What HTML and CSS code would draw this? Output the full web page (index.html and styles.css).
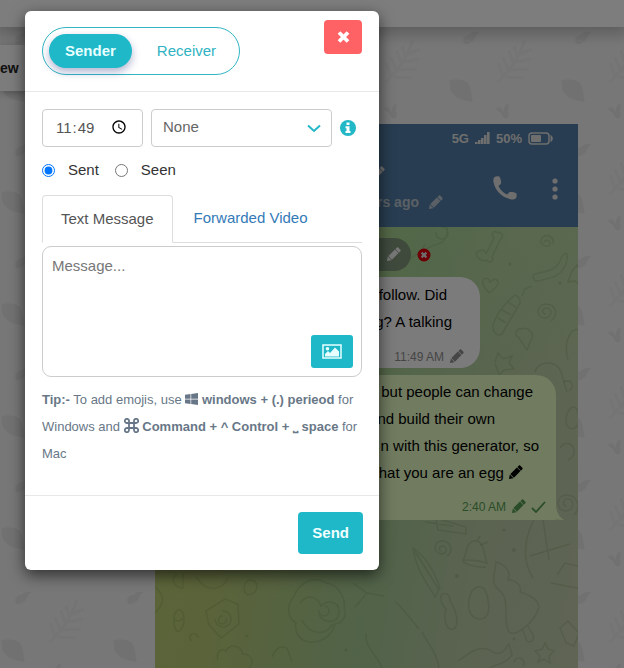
FILE: index.html
```html
<!DOCTYPE html>
<html lang="en">
<head>
<meta charset="utf-8">
<meta name="viewport" content="width=device-width, initial-scale=1">
<title>Chat generator</title>
<link rel="stylesheet" href="styles.css">
</head>
<body>
<svg class="defs" aria-hidden="true">
  <symbol id="pencil" viewBox="0 0 16 16"><path d="M1 15l1-4.800L5.800 14zM2.500 9.700l7-7 3.800 3.800-7 7zM10 2.200l1.500-1.500c.5-.5 1.200-.5 1.700 0l2.100 2.100c.5.5.5 1.200 0 1.700L13.800 6z"/></symbol>
</svg>

<div class="page">
  <svg class="leaves" aria-hidden="true">
    <defs>
      <pattern id="leaf" width="112" height="112" patternUnits="userSpaceOnUse">
        <path d="M1 81c5-3 14-2 19 2 3 4 3 10 5 19-8-1-16-3-20-8-4-4-2-8-4-13z"/>
        <path d="M16 44c-2-5 0-9 5-9 2-3 7-4 11-3-4 2-4 5-6 8-3 3-6 5-10 4z"/>
        <path d="M48 108c4-2 6 0 8 5-1-5 1-9 5-10 0 5-2 8-1 12h-8c-1-4-3-4-4-7zM52 0h9l-1 6h-4z"/>
        <g class="fern"><path d="M50 82c12-12 20-22 27-42M56 78l-6-15M61 72l-6-15M66 65l-5-14M70 58l-4-12M58 77l18 1M63 70l18-1M68 62l15-3M72 54l12-5"/></g>
      </pattern>
    </defs>
    <rect width="100%" height="100%" fill="url(#leaf)"/>
  </svg>
  <header class="topbar"></header>
  <main class="workspace">
    <aside class="side"><div class="side-tab">ew</div></aside>
    <section class="phone">
      <div class="phone-head">
        <div class="status">
          <span>5G</span>
          <svg width="15" height="13" viewBox="0 0 15 13"><path d="M0 12v-2h2.600v2zM3 12V8h2.600v4zM6 12V6h2.600v6zM9 12V3h2.600v9zM12 12V0h2.600v12z"/></svg>
          <span>50%</span>
          <svg width="25" height="13" viewBox="0 0 25 13"><rect x="1" y="1" width="20" height="11" rx="3" fill="none" stroke="currentColor" stroke-width="1.500"/><rect x="3" y="3" width="10" height="7" rx="1"/><path d="M22.500 3c3 1 3 6 0 7z"/></svg>
        </div>
        <div class="contact">
          <div class="who">
            <svg class="ico" width="15" height="15"><use href="#pencil"/></svg>
            <div class="seen">hours ago <svg class="ico" width="15" height="15"><use href="#pencil"/></svg></div>
          </div>
          <svg class="call" width="24" height="24" viewBox="0 0 24 24"><path d="M1 1.500C2.500.3 5 0 6.500.8 8 3.500 8.300 6 8 7.500c-.3 1-2 1.800-2.500 2.500 1.800 3.800 4.500 6.700 8.500 8.500 1-.5 1.600-2.200 3-2.500 2-.2 4.500.3 6.300 1.300.7 1.700.3 4-.8 5.500-1.300.8-3.500.8-5 .4C8.500 21 2.500 15 .6 6.500.2 4.800.3 2.500 1 1.500z"/></svg>
          <svg class="dots" width="6" height="22" viewBox="0 0 6 22"><circle cx="3" cy="3" r="2.600"/><circle cx="3" cy="11" r="2.600"/><circle cx="3" cy="19" r="2.600"/></svg>
        </div>
      </div>
      <div class="chat">
        <svg class="doodles" aria-hidden="true"><g transform="translate(-155 -227)">
          <path d="M380 262c15 4 38-2 45-18M425 250c8-8 24-2 22-23M436 232a6 6 0 1 0 5-5M476 254c3-6 10-4 10 0l8-16c-4-4 0-9 4-5 5-2 6 4 2 7l-8 17c3 4-3 7-5 3-5 2-9-1-11-6zM535 274c10-3 20-2 25-13 2-7 9-12 7-2-2 16-14 19-30 22-4 1-5-6-2-7zM544 243a3 3 0 1 1 4 3c-6 1-9-4-6-8 5-6 13 0 11 6"/>
          <path d="M489 293c-6-7-8-11-5-14 3-2 5 0 6 3 2-3 7-4 8 0 1 3-2 6-9 11zM493 325c4-12 12-22 22-30 5 2 6 6 4 10l-17 29c-5 3-10-2-9-9zM498 318l8 5M502 310l9 5M508 302l9 6M522 296l3-7 7-3M546 314c-5 0-4-7 1-6 6 1 5 9-2 10-9 0-9-13 0-14 11 0 14 10 6 17M520 338c-7-2-4-10 2-9 7-3 13 6 9 11l-4 10-8-12M568 360c-5-20 3-33 12-30M495 362l3-9 5 6 9-3-3 7 5 6-10 1-5 5-4-12M535 372c2-11 22-13 26 0l6 20M572 271l5-6 4 7 7 2-6 5-1 7-6-5-7 1z"/>
          <path d="M563 382c10-4 12 5 6 9M566 419c2-16 13-16 13 0 0 12-14 14-13 0M560 448c9-14 22 6 8 12M566 506c-5-1-2-8 3-7 7 2 4 12-4 12-9-1-9-14 0-16 12-1 17 12 9 20M425 522l28 4M438 530l28 4v-7l-30-9zM441 551c-3-1-2-5 2-5 5 1 4 8-2 8-8-1-8-13 1-13 9 0 12 10 5 15M463 560c4-4 2-19 12-19 9 0 8 10 12 22-9-3-16-3-24-3zM463 560c-2 4 16 8 23 7M477 541l3-5"/>
          <path d="M413 548c12 8 21 22 27 40l-5 9c-8-14-19-27-22-49zM413 548l26 42M441 595c6-4 9 1 9 6 8 12 9 26 3 28-7 2-10-12-7-20-3-3-6-8-5-14M395 601c8 8 16 18 24 28M469 600c2-15 15-18 18-5 4 16 1 24-7 24-8 0-13-8-11-19zM496 562c8 2 16 9 12 18 8 0 14 6 12 12 10 3 18 8 19 15-3 13-20 28-28 26-8-2-3-31-7-37-4-6-6-7-8-9-5-5-1-14 0-25zM522 628l5 13c4 3 8-2 6-6l-5-9M480 545l8-3M534 519c-10 21-12 42-1 59M557 575l8-12 16 4M551 583l31 6M530 556l40-12M540 500l9 60"/>
          <path d="M294 596c6-14 20-21 32-13 12 1 20 15 18 26 4 7-3 15-9 15-4 15-17 19-26 18-13-2-14-14-13-19-10-6-9-18-2-27zM300 603c9-11 18-5 21 3 8-8 19-3 18 7-2 13-17 9-20 2M319 610a5 5 0 1 0 6-4M302 620c6 13 22 18 31 4M353 583l14 10 17 3M367 593l-12 14M366 633c-2 14 12 23 16 35M422 632c5 11 14 18 17 36M458 661c12-8 22-18 35-9 7 5 13-3 16-8l3 11c-8 11-18 9-22 13M535 651l7-2 3-6 3 6 6 2-5 5 1 7-6-4-6 3 2-6zM514 663a5 5 0 1 1 9 3M560 628l8-7 11 12-5 13-8-3z"/>
          <path d="M174 621c0-14 9-15 10-3 1 10-9 23-10 3zM175 620c5 3 9-2 9-5M206 611l19-12 13 5 1 20-18 14-12-13zM215 619a8 8 0 1 0 7-8M223 616a4 4 0 1 0 3 2M192 641a4 4 0 1 1 6-3M218 660c-3-10 6-12 8-9 5-9 17-4 16 3 9-1 13 8 7 14M177 575c-7 2-4 12 6 13v-15M196 577c10 15 25 15 32 1M244 588c1-11 13-10 13-1 0 8-13 12-13 1M155 587c12 10 8 18 0 26M272 657c4-9 8-12 15-9l5 14"/>
          <g class="specks"><circle cx="457" cy="576" r="2"/><circle cx="514" cy="550" r="2"/><circle cx="504" cy="530" r="1.500"/><circle cx="514" cy="639" r="1.500"/><circle cx="346" cy="650" r="1.500"/><circle cx="510" cy="264" r="1.500"/><circle cx="560" cy="283" r="1.500"/><circle cx="247" cy="636" r="1.500"/></g>
        </g></svg>
        <div class="reaction">
          <span class="chip"><svg class="ico" width="15" height="15"><use href="#pencil"/></svg></span>
          <svg width="14" height="14" viewBox="0 0 14 14"><circle cx="7" cy="7" r="6.500" fill="#d9000c"/><path d="M4.600 4.600l4.800 4.800M9.400 4.600L4.600 9.400" stroke="#ddd" stroke-width="2.200"/></svg>
        </div>
        <div class="bubble incoming">
          <span class="line l-33">to follow. Did</span>
          <span class="line l-28">thing? A talking</span>
          <div class="meta">11:49 AM <svg class="ico" width="15" height="15"><use href="#pencil"/></svg></div>
        </div>
        <div class="bubble outgoing">
          <span class="line l-23">but people can change</span>
          <span class="line l-61">and build their own</span>
          <span class="line l-17">n with this generator, so</span>
          <span class="line l-33">that you are an egg <svg class="ico" width="15" height="15"><use href="#pencil"/></svg></span>
          <div class="meta">2:40 AM <svg class="ico" width="15" height="15"><use href="#pencil"/></svg> <svg width="15" height="12" viewBox="0 0 15 12"><path d="M1 7l4 4L14 1" fill="none" stroke="currentColor" stroke-width="1.800"/></svg></div>
          <svg class="tail" width="20" height="20" viewBox="0 0 20 20"><path d="M0 0h10c0 8 2 13 8 17-7 0-12-1-18-3z"/></svg>
        </div>
      </div>
    </section>
  </main>
</div>

<div class="backdrop">
  <form class="modal" role="dialog" aria-label="Add message">
    <div class="modal-head">
      <div class="switch">
        <button type="button" class="active">Sender</button>
        <button type="button" class="other">Receiver</button>
      </div>
      <button type="button" class="close" aria-label="Close"><svg width="13" height="12" viewBox="0 0 13 12"><path d="M2 1.500l9 9M11 1.500l-9 9" stroke="currentColor" stroke-width="3.800"/></svg></button>
    </div>
    <div class="modal-body">
      <div class="fields">
        <input class="time" type="time" value="11:49" aria-label="Time">
        <div class="select">
          <select aria-label="Attachment"><option>None</option></select>
          <svg width="14" height="9" viewBox="0 0 14 9"><path d="M1 1.500l6 5.500 6-5.500" fill="none" stroke="currentColor" stroke-width="2"/></svg>
        </div>
        <svg class="info" width="16" height="16" viewBox="0 0 16 16"><circle cx="8" cy="8" r="8"/><path d="M6.500 2.500h3v2.500h-3zM5.500 6.300h4v4.700h1v2h-5v-2h1V8.300h-1z" fill="#fff"/></svg>
      </div>
      <div class="radios">
        <label><input type="radio" name="state" checked>Sent</label>
        <label><input type="radio" name="state">Seen</label>
      </div>
      <nav class="tabs">
        <a href="#text" class="current">Text Message</a>
        <a href="#video">Forwarded Video</a>
      </nav>
      <div class="message">
        <textarea placeholder="Message..." aria-label="Message"></textarea>
        <button type="button" class="image" aria-label="Add image"><svg width="20" height="15" viewBox="0 0 20 15"><rect x="1" y="1" width="18" height="13" fill="none" stroke="currentColor" stroke-width="1.500"/><circle cx="5.500" cy="4.800" r="1.800"/><path d="M3 12.500V10l3-3 2 2 5-5.500 4 4v5z"/></svg></button>
      </div>
      <p class="tip"><b>Tip:-</b> To add emojis, use <svg width="13" height="12" viewBox="0 0 13 12"><path d="M0 1.800l5.500-.8v4.700H0zM6.200.9L13 0v5.700H6.200zM0 6.400h5.500v4.700L0 10.300zM6.200 6.400H13V12l-6.800-.9z"/></svg> <b>windows + (.) perieod</b> for Windows and <svg class="cmd" width="15" height="15" viewBox="0 0 15 15"><path d="M5 5V3.200A2.100 2.100 0 1 0 3 5h9a2.100 2.100 0 1 0-2-2v9a2.100 2.100 0 1 0 2-2H3a2.100 2.100 0 1 0 2 2z" fill="none" stroke="currentColor" stroke-width="1.800"/></svg> <b>Command + ^ Control + ⎵ space</b> for Mac</p>
    </div>
    <div class="modal-foot"><button type="submit" class="send">Send</button></div>
  </form>
</div>
</body>
</html>
```
FILE: styles.css
```css
* { box-sizing: border-box; }
body {
  margin: 0;
  font-family: "Liberation Sans", Arial, sans-serif;
  font-size: 15px;
  color: #333;
}
button, input, select, textarea { font: inherit; margin: 0; }
svg { flex: none; fill: currentColor; }
.defs { position: absolute; width: 0; height: 0; }

.page { position: relative; height: 100vh; overflow: hidden; background: #efefef; }
.leaves { position: absolute; inset: 0; width: 100%; height: 100%; fill: #e3e3e3; }
.fern { fill: none; stroke: #e8e8e8; stroke-width: 3; }
.topbar { position: relative; height: 27px; background: #fafafa; box-shadow: 0 4px 14px 4px rgba(0, 0, 0, .2); }
.workspace {
  position: relative;
  display: grid;
  grid-template-columns: 155px minmax(0, 423px) 1fr;
  min-height: calc(100vh - 27px);
}
.side { padding-top: 18px; }
.side-tab {
  width: 100px;
  line-height: 46px;
  font-size: 14px;
  font-weight: bold;
  color: #222;
  background: #f8f8f8;
  box-shadow: 0 2px 8px rgba(0, 0, 0, .3);
}
.phone { display: flex; flex-direction: column; padding-top: 97px; }
.phone-head { height: 103px; padding: 6px 20px 0 0; background: #517ba3; color: #dcdcdc; }
.status { display: flex; justify-content: flex-end; align-items: center; gap: 6px; padding-right: 5px; height: 16px; font-size: 13px; font-weight: bold; }
.contact { display: flex; justify-content: flex-end; padding-top: 20px; }
.who { display: flex; flex-direction: column; align-items: flex-end; gap: 13px; margin-right: 50px; }
.who > .ico { margin-right: 58px; }
.seen { display: flex; align-items: center; gap: 9px; font-weight: bold; font-size: 14px; color: #b4c0cb; }
.call { margin-top: 10px; margin-right: 35px; }
.dots { margin-top: 12px; }

.chat {
  position: relative;
  flex: 1;
  padding-top: 11px;
  background:
    linear-gradient(180deg, rgba(170, 232, 148, .3), transparent 55%),
    linear-gradient(98deg, #b8cc72 0, #b5c674 22%, #a3c692 54%, #b6c6a2 75%, #bfc9a8 100%);
}
.doodles { position: absolute; inset: 0; width: 100%; height: 100%; fill: none; stroke: #52783c; stroke-opacity: .17; stroke-width: 1.5; }
.specks { fill: #52783c; fill-opacity: .2; stroke: none; }
.reaction { position: relative; display: flex; align-items: center; gap: 6px; padding-left: 180px; }
.chip { display: flex; align-items: center; justify-content: flex-end; width: 76px; height: 33px; padding-right: 10px; border-radius: 17px; background: #7f957a; color: #eee; }
.bubble { position: relative; margin-left: 15px; text-align: right; color: #000; }
.line { display: block; line-height: 27px; white-space: nowrap; }
.l-17 { padding-right: 17px; }
.l-23 { padding-right: 23px; }
.l-28 { padding-right: 28px; }
.l-33 { padding-right: 33px; }
.l-61 { padding-right: 61px; }
.meta { display: flex; justify-content: flex-end; align-items: center; gap: 5px; font-size: 12px; }
.line .ico { vertical-align: -2px; }
.incoming { width: 310px; height: 91px; margin-top: 6px; padding-top: 4px; border-radius: 20px; background: #f6f6f6; }
.incoming .meta { padding: 14px 16px 0 0; color: #8c8c8c; }
.outgoing { width: 386px; height: 145px; margin-top: 7px; padding-top: 3px; border-radius: 20px 20px 0 20px; background: #e0f7c0; }
.outgoing .meta { padding: 13px 10px 0 0; color: #559a50; }
.tail { position: absolute; right: -10px; bottom: -3px; fill: #e0f7c0; }

.backdrop { position: absolute; inset: 0; padding: 11px 25px; background: rgba(0, 0, 0, .5); }
.modal { max-width: 354px; border-radius: 6px; background: #fff; box-shadow: 0 5px 15px rgba(0, 0, 0, .6); }
.modal-head { display: flex; justify-content: space-between; align-items: flex-start; padding: 16px 17px; border-bottom: 1px solid #e8e8e8; }
.switch { display: flex; gap: 8px; padding: 6px; border: 1px solid #33b5c3; border-radius: 24px; }
.switch button { height: 34px; padding: 0 16px 2px; border: 0; border-radius: 17px; background: none; color: #2fb3c2; }
.switch .other { padding: 0 17px 2px; }
.switch .active { font-weight: bold; color: #e8ffff; background: #1eb8c8; box-shadow: 0 4px 8px rgba(60, 70, 140, .4); }
.close { display: flex; align-items: center; justify-content: center; width: 38px; height: 34px; margin-top: -7px; padding: 0; border: 0; border-radius: 4px; color: #fff; background: #ff6265; }
.modal-body { padding: 17px 17px 28px; border-bottom: 1px solid #e8e8e8; }
.fields { display: flex; align-items: center; gap: 8px; }
.time { width: 101px; height: 38px; padding: 0 12px 2px; border: 1px solid #ccc; border-radius: 4px; color: #555; background: #fff; }
.time::-webkit-datetime-edit-ampm-field { display: none; }
.select { position: relative; flex: 1; max-width: 181px; color: #22b8c7; }
.select select { display: block; width: 100%; height: 38px; padding: 0 11px 3px; border: 1px solid #ccc; border-radius: 4px; appearance: none; color: #666; background: #fff; }
.select svg { position: absolute; right: 11px; top: 15px; pointer-events: none; }
.info { color: #22b8c7; }
.radios { display: flex; gap: 16px; padding-top: 13px; line-height: 20px; }
.radios label { display: flex; align-items: center; gap: 13px; }
.tabs { display: flex; margin-top: 15px; border-bottom: 1px solid #ddd; }
.tabs a { padding: 0 21px; line-height: 46px; color: #337ab7; text-decoration: none; }
.tabs .current { margin-bottom: -1px; padding: 0 18px; border: 1px solid #ddd; border-bottom-color: #fff; border-radius: 4px 4px 0 0; color: #555; }
.message { position: relative; margin-top: 3px; }
.message textarea { display: block; width: 100%; height: 131px; padding: 10px 9px; border: 1px solid #ccc; border-radius: 9px; resize: none; }
.message textarea::placeholder { color: #777; }
.image { position: absolute; right: 9px; bottom: 9px; display: flex; align-items: center; justify-content: center; width: 42px; height: 33px; padding: 0; border: 0; border-radius: 3px; color: #e8ffff; background: #1eb8c8; }
.tip { margin: 9px -4px 0 0; font-size: 13px; line-height: 27px; color: #687787; }
.tip svg { vertical-align: -1px; }
.tip .cmd { vertical-align: -2px; }
.modal-foot { display: flex; justify-content: flex-end; padding: 16px; }
.send { height: 42px; padding: 0 14px 2px; border: 0; border-radius: 4px; font-weight: bold; color: #f0ffff; background: #1eb8c8; }
```
